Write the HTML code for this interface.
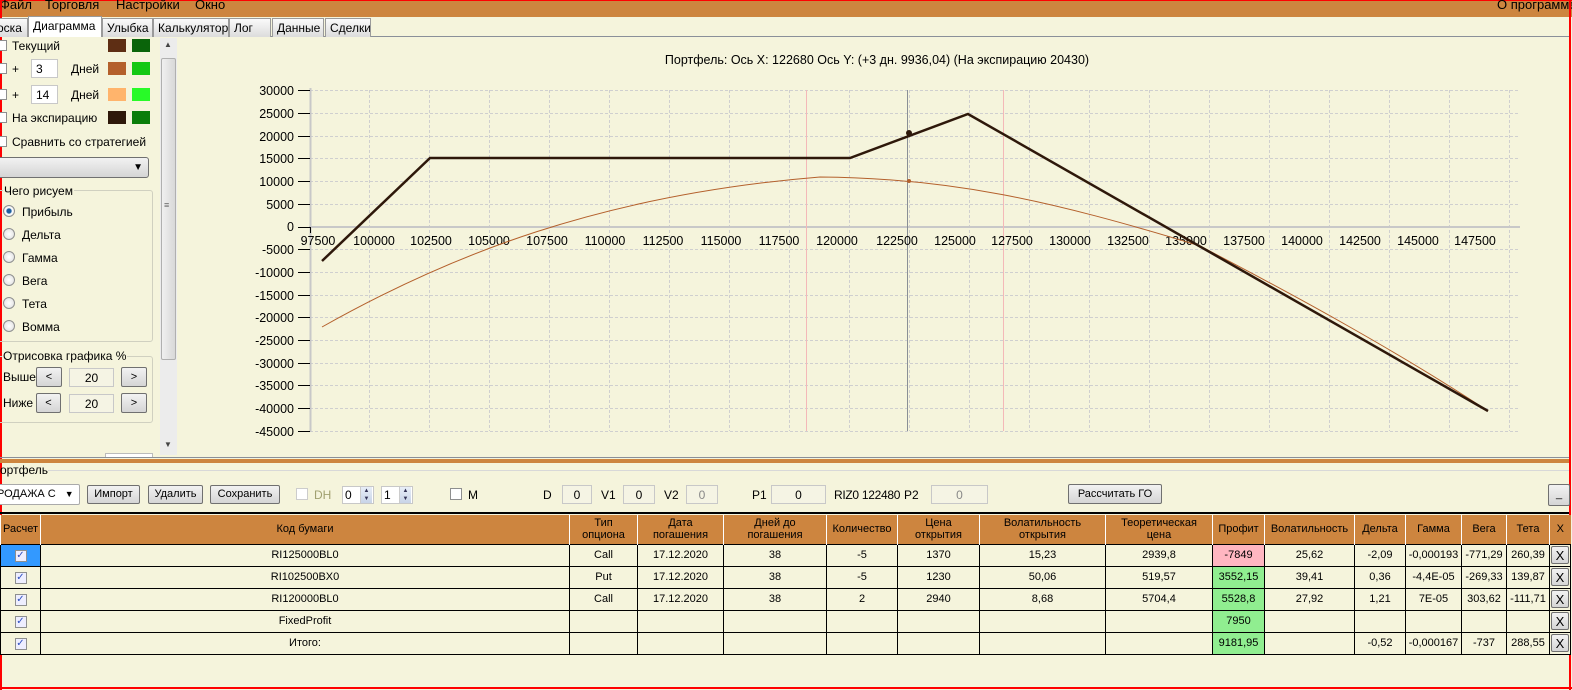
<!DOCTYPE html>
<html><head><meta charset="utf-8">
<style>
*{box-sizing:border-box;margin:0;padding:0}
body{width:1572px;height:690px;overflow:hidden;background:#f5f4dc;font-family:"Liberation Sans",Arial,sans-serif;font-size:12px;color:#000;position:relative}
.a{position:absolute;white-space:nowrap}
.menu{left:0;top:0;width:1572px;height:17px;background:#cd853f;border-top:1px solid #f00}
.menu span{position:absolute;top:-4px;font-size:13px;white-space:nowrap}
.tab{position:absolute;top:18px;height:19px;border:1px solid #9a9a9a;border-bottom:none;background:linear-gradient(#fafafa,#dcdcdc);font-size:12px;padding:2px 4px 0 4px;white-space:nowrap;overflow:hidden}
.cb{position:absolute;width:11px;height:11px;border:1px solid #8e8f8f;background:#fff}
.sw{position:absolute;width:18px;height:13px}
.inp{position:absolute;background:#fff;border:1px solid #c8c8c8;height:19px;padding:2px 4px}
.rd{position:absolute;width:12px;height:12px;border-radius:50%;border:1px solid #8e8f8f;background:radial-gradient(#fff,#ddd)}
.btn{position:absolute;border:1px solid #707070;border-radius:2px;background:linear-gradient(#f2f2f2,#d5d5d5);text-align:center;font-size:11px;white-space:nowrap}
.box{position:absolute;border:1px solid #d0d0c0;border-radius:3px}
.spn{position:absolute;width:12px;height:16px;border-left:1px solid #ccc;background:linear-gradient(#e8eef8,#c8d4e8);font-size:6px;line-height:8px;text-align:center;color:#335}
table{position:absolute;left:0;top:515px;border-collapse:collapse;table-layout:fixed;font-size:11px}
th{background:#cd853f;font-weight:normal;height:29px;border-left:1px solid #fff;line-height:12px;padding:0}
td{height:22px;border:1px solid #000;text-align:center;padding:0;background:#f5f4dc}
td.x{padding:1px}
td.x div{border:1px solid #707070;border-radius:2px;background:linear-gradient(#f2f2f2,#d5d5d5);height:18px;line-height:18px;font-size:13px}
.ck{display:inline-block;width:12px;height:12px;border:1px solid #8e8f8f;background:#eef;color:#3050c0;font-size:10px;line-height:10px}
</style></head><body>
<div class="a menu"><span style="left:0">Файл</span><span style="left:45px">Торговля</span><span style="left:116px">Настройки</span><span style="left:195px">Окно</span><span style="left:1497px">О программе</span></div>
<div class="a" style="left:0;top:0;width:2px;height:690px;background:#f00"></div>
<div class="a" style="left:1569px;top:0;width:2px;height:690px;background:#f00"></div>
<div class="a" style="left:0;top:687px;width:1572px;height:2px;background:#f00"></div>
<div class="a" style="left:0;top:36px;width:1569px;height:1px;background:#8a8f99"></div>
<div class="tab" style="left:-8px;width:36px">оска</div>
<div class="tab" style="left:28px;top:16px;height:21px;width:74px;background:#fff">Диаграмма</div>
<div class="tab" style="left:102px;width:51px">Улыбка</div>
<div class="tab" style="left:153px;width:76px">Калькулятор</div>
<div class="tab" style="left:229px;width:42px">Лог</div>
<div class="tab" style="left:272px;width:52px">Данные</div>
<div class="tab" style="left:325px;width:46px">Сделки</div>

<div class="cb" style="left:-4px;top:40px"></div><div class="a" style="left:12px;top:39px">Текущий</div>
<div class="sw" style="left:108px;top:39px;background:#5e2e14"></div><div class="sw" style="left:132px;top:39px;background:#0a640a"></div>
<div class="cb" style="left:-4px;top:63px"></div><div class="a" style="left:12px;top:62px">+</div>
<div class="inp" style="left:31px;top:59px;width:27px">3</div><div class="a" style="left:71px;top:62px">Дней</div>
<div class="sw" style="left:108px;top:62px;background:#b4602c"></div><div class="sw" style="left:132px;top:62px;background:#14c814"></div>
<div class="cb" style="left:-4px;top:89px"></div><div class="a" style="left:12px;top:88px">+</div>
<div class="inp" style="left:31px;top:85px;width:27px">14</div><div class="a" style="left:71px;top:88px">Дней</div>
<div class="sw" style="left:108px;top:88px;background:#ffb46c"></div><div class="sw" style="left:132px;top:88px;background:#28fa28"></div>
<div class="cb" style="left:-4px;top:112px"></div><div class="a" style="left:12px;top:111px">На экспирацию</div>
<div class="sw" style="left:108px;top:111px;background:#2e180a"></div><div class="sw" style="left:132px;top:111px;background:#0a7d0a"></div>
<div class="cb" style="left:-4px;top:136px"></div><div class="a" style="left:12px;top:135px">Сравнить со стратегией</div>
<div class="btn" style="left:-4px;top:157px;width:153px;height:21px;border-radius:3px;text-align:right;padding-right:5px;font-size:10px;line-height:19px">▼</div>
<div class="box" style="left:-4px;top:190px;width:157px;height:152px"></div>
<div class="a" style="left:3px;top:184px;background:#f5f4dc;padding:0 1px">Чего рисуем</div>
<div class="rd" style="left:3px;top:205px;background:radial-gradient(#1d5fa0 30%,#fff 45%,#ddd)"></div><div class="a" style="left:22px;top:205px">Прибыль</div>
<div class="rd" style="left:3px;top:228px"></div><div class="a" style="left:22px;top:228px">Дельта</div>
<div class="rd" style="left:3px;top:251px"></div><div class="a" style="left:22px;top:251px">Гамма</div>
<div class="rd" style="left:3px;top:274px"></div><div class="a" style="left:22px;top:274px">Вега</div>
<div class="rd" style="left:3px;top:297px"></div><div class="a" style="left:22px;top:297px">Тета</div>
<div class="rd" style="left:3px;top:320px"></div><div class="a" style="left:22px;top:320px">Вомма</div>
<div class="box" style="left:-4px;top:356px;width:157px;height:67px"></div>
<div class="a" style="left:2px;top:349px;background:#f5f4dc;padding:0 1px">Отрисовка графика %</div>
<div class="a" style="left:3px;top:370px">Выше</div>
<div class="btn" style="left:36px;top:367px;width:26px;height:20px;line-height:18px">&lt;</div>
<div class="inp" style="left:69px;top:368px;width:45px;text-align:center;background:#f5f4e4">20</div>
<div class="btn" style="left:121px;top:367px;width:26px;height:20px;line-height:18px">&gt;</div>
<div class="a" style="left:3px;top:396px">Ниже</div>
<div class="btn" style="left:36px;top:393px;width:25px;height:20px;line-height:18px">&lt;</div>
<div class="inp" style="left:69px;top:394px;width:45px;text-align:center;background:#f5f4e4">20</div>
<div class="btn" style="left:121px;top:393px;width:26px;height:20px;line-height:18px">&gt;</div>
<div class="a" style="left:105px;top:453px;width:48px;height:4px;border:1px solid #bbb;border-bottom:none;background:#fff"></div>
<div class="a" style="left:160px;top:38px;width:17px;height:417px;background:#ececec"></div>
<div class="a" style="left:161px;top:58px;width:15px;height:302px;background:linear-gradient(90deg,#f0f0f0,#d8d8d8);border:1px solid #b0b0b0;border-radius:2px"></div>
<div class="a" style="left:164px;top:40px;font-size:8px;color:#444">▲</div>
<div class="a" style="left:164px;top:440px;font-size:8px;color:#444">▼</div>
<div class="a" style="left:164px;top:200px;font-size:9px;color:#666">≡</div>

<svg class="a" style="left:0;top:0" width="1572" height="460" font-family="Liberation Sans,Arial,sans-serif" font-size="12">
<text x="877" y="64" text-anchor="middle" font-size="12.5">Портфель: Ось X: 122680 Ось Y:  (+3 дн. 9936,04)  (На экспирацию 20430)</text>
<g stroke="#cfcfcf" stroke-dasharray="3,2" stroke-width="1">
<line x1="310" y1="90.5" x2="1520" y2="90.5"/><line x1="310" y1="113.5" x2="1520" y2="113.5"/><line x1="310" y1="136.5" x2="1520" y2="136.5"/><line x1="310" y1="158.5" x2="1520" y2="158.5"/><line x1="310" y1="181.5" x2="1520" y2="181.5"/><line x1="310" y1="204.5" x2="1520" y2="204.5"/><line x1="310" y1="249.5" x2="1520" y2="249.5"/><line x1="310" y1="272.5" x2="1520" y2="272.5"/><line x1="310" y1="295.5" x2="1520" y2="295.5"/><line x1="310" y1="317.5" x2="1520" y2="317.5"/><line x1="310" y1="340.5" x2="1520" y2="340.5"/><line x1="310" y1="363.5" x2="1520" y2="363.5"/><line x1="310" y1="385.5" x2="1520" y2="385.5"/><line x1="310" y1="408.5" x2="1520" y2="408.5"/><line x1="310" y1="431.5" x2="1520" y2="431.5"/>
<line x1="369.5" y1="90" x2="369.5" y2="431"/><line x1="429.5" y1="90" x2="429.5" y2="431"/><line x1="489.5" y1="90" x2="489.5" y2="431"/><line x1="549.5" y1="90" x2="549.5" y2="431"/><line x1="609.5" y1="90" x2="609.5" y2="431"/><line x1="669.5" y1="90" x2="669.5" y2="431"/><line x1="729.5" y1="90" x2="729.5" y2="431"/><line x1="789.5" y1="90" x2="789.5" y2="431"/><line x1="849.5" y1="90" x2="849.5" y2="431"/><line x1="909.5" y1="90" x2="909.5" y2="431"/><line x1="969.5" y1="90" x2="969.5" y2="431"/><line x1="1029.5" y1="90" x2="1029.5" y2="431"/><line x1="1089.5" y1="90" x2="1089.5" y2="431"/><line x1="1149.5" y1="90" x2="1149.5" y2="431"/><line x1="1209.5" y1="90" x2="1209.5" y2="431"/><line x1="1269.5" y1="90" x2="1269.5" y2="431"/><line x1="1329.5" y1="90" x2="1329.5" y2="431"/><line x1="1389.5" y1="90" x2="1389.5" y2="431"/><line x1="1449.5" y1="90" x2="1449.5" y2="431"/><line x1="1509.5" y1="90" x2="1509.5" y2="431"/>
</g>
<line x1="310.5" y1="88" x2="310.5" y2="432" stroke="#c8c8c8" stroke-width="2"/>
<line x1="309" y1="227" x2="1520" y2="227" stroke="#c8c8c8" stroke-width="2"/>
<line x1="806.5" y1="90" x2="806.5" y2="431" stroke="#f4b8b8"/>
<line x1="1003.5" y1="90" x2="1003.5" y2="431" stroke="#f4b8b8"/>
<line x1="907.5" y1="90" x2="907.5" y2="431" stroke="#8a8f96"/>
<g stroke="#000"><line x1="298" y1="90.5" x2="310" y2="90.5"/><line x1="298" y1="113.5" x2="310" y2="113.5"/><line x1="298" y1="136.5" x2="310" y2="136.5"/><line x1="298" y1="158.5" x2="310" y2="158.5"/><line x1="298" y1="181.5" x2="310" y2="181.5"/><line x1="298" y1="204.5" x2="310" y2="204.5"/><line x1="298" y1="227.5" x2="310" y2="227.5"/><line x1="298" y1="249.5" x2="310" y2="249.5"/><line x1="298" y1="272.5" x2="310" y2="272.5"/><line x1="298" y1="295.5" x2="310" y2="295.5"/><line x1="298" y1="317.5" x2="310" y2="317.5"/><line x1="298" y1="340.5" x2="310" y2="340.5"/><line x1="298" y1="363.5" x2="310" y2="363.5"/><line x1="298" y1="385.5" x2="310" y2="385.5"/><line x1="298" y1="408.5" x2="310" y2="408.5"/><line x1="298" y1="431.5" x2="310" y2="431.5"/><line x1="310.5" y1="227" x2="310.5" y2="233"/></g>
<g text-anchor="end" font-size="12.5"><text x="294" y="95">30000</text><text x="294" y="118">25000</text><text x="294" y="141">20000</text><text x="294" y="163">15000</text><text x="294" y="186">10000</text><text x="294" y="209">5000</text><text x="294" y="231">0</text><text x="294" y="254">-5000</text><text x="294" y="277">-10000</text><text x="294" y="300">-15000</text><text x="294" y="322">-20000</text><text x="294" y="345">-25000</text><text x="294" y="368">-30000</text><text x="294" y="390">-35000</text><text x="294" y="413">-40000</text><text x="294" y="436">-45000</text></g>
<g text-anchor="middle" font-size="12.5"><text x="318" y="245">97500</text><text x="374" y="245">100000</text><text x="431" y="245">102500</text><text x="489" y="245">105000</text><text x="547" y="245">107500</text><text x="605" y="245">110000</text><text x="663" y="245">112500</text><text x="721" y="245">115000</text><text x="779" y="245">117500</text><text x="837" y="245">120000</text><text x="897" y="245">122500</text><text x="955" y="245">125000</text><text x="1012" y="245">127500</text><text x="1070" y="245">130000</text><text x="1128" y="245">132500</text><text x="1186" y="245">135000</text><text x="1244" y="245">137500</text><text x="1302" y="245">140000</text><text x="1360" y="245">142500</text><text x="1418" y="245">145000</text><text x="1475" y="245">147500</text></g>
<path fill="none" stroke="#b4602c" stroke-width="1" d="M322,327 C450,255 600,195 820,177 C950,178 1050,200 1200,246 C1300,298 1400,353 1488,411"/>
<polyline fill="none" stroke="#2e180a" stroke-width="2.5" points="322,261 430,158 850,158 968,114 1488,411"/>
<circle cx="909" cy="133" r="3" fill="#2e180a"/>
<circle cx="909" cy="181" r="2" fill="#b4602c"/>
</svg>

<div class="a" style="left:0;top:457px;width:1569px;height:1px;background:#8a8f99"></div>
<div class="a" style="left:0;top:459px;width:1569px;height:4px;background:#cd853f"></div>
<div class="a" style="left:0;top:463px">ортфель</div>
<div class="a" style="left:48px;top:470px;width:1521px;height:1px;background:#d8d8d8"></div>
<div class="btn" style="left:-4px;top:484px;width:84px;height:21px;background:#fff;border-color:#aaa;text-align:left;padding:3px 0 0 0;font-size:11px">РОДАЖА С <span style="font-size:9px;margin-left:6px">▼</span></div>
<div class="btn" style="left:87px;top:485px;width:53px;height:19px;line-height:17px">Импорт</div>
<div class="btn" style="left:148px;top:485px;width:55px;height:19px;line-height:17px">Удалить</div>
<div class="btn" style="left:210px;top:485px;width:70px;height:19px;line-height:17px">Сохранить</div>
<div class="cb" style="left:296px;top:488px;width:12px;height:12px;border-color:#ccc"></div><div class="a" style="left:314px;top:488px;color:#a0a070">DH</div>
<div class="inp" style="left:342px;top:486px;width:32px;height:18px;padding:1px 2px">0</div><div class="spn" style="left:360px;top:487px">▲<br>▼</div>
<div class="inp" style="left:381px;top:486px;width:32px;height:18px;padding:1px 2px">1</div><div class="spn" style="left:399px;top:487px">▲<br>▼</div>
<div class="cb" style="left:450px;top:488px;width:12px;height:12px"></div><div class="a" style="left:468px;top:488px">M</div>
<div class="a" style="left:543px;top:488px">D</div><div class="inp" style="left:562px;top:485px;width:30px;text-align:center;background:#f5f4e4">0</div>
<div class="a" style="left:601px;top:488px">V1</div><div class="inp" style="left:623px;top:485px;width:32px;text-align:center;background:#f5f4e4">0</div>
<div class="a" style="left:664px;top:488px">V2</div><div class="inp" style="left:686px;top:485px;width:32px;text-align:center;background:#f5f4e4;color:#888">0</div>
<div class="a" style="left:752px;top:488px">P1</div><div class="inp" style="left:771px;top:485px;width:55px;text-align:center;background:#f5f4e4">0</div>
<div class="a" style="left:834px;top:488px;letter-spacing:-0.3px">RIZ0 122480</div><div class="a" style="left:904px;top:488px">P2</div>
<div class="inp" style="left:931px;top:485px;width:57px;text-align:center;background:#f5f4e4;color:#888">0</div>
<div class="btn" style="left:1068px;top:484px;width:94px;height:20px;line-height:18px">Рассчитать ГО</div>
<div class="btn" style="left:1548px;top:484px;width:22px;height:22px;line-height:18px">_</div>
<div class="a" style="left:0;top:512px;width:1569px;height:2px;background:#000"></div>

<table>
<colgroup><col style="width:40px"><col style="width:529px"><col style="width:68px"><col style="width:86px"><col style="width:103px"><col style="width:71px"><col style="width:82px"><col style="width:126px"><col style="width:107px"><col style="width:52px"><col style="width:90px"><col style="width:51px"><col style="width:56px"><col style="width:45px"><col style="width:43px"><col style="width:21px"></colgroup>
<tr><th>Расчет</th><th>Код бумаги</th><th>Тип<br>опциона</th><th>Дата<br>погашения</th><th>Дней до<br>погашения</th><th>Количество</th><th>Цена<br>открытия</th><th>Волатильность<br>открытия</th><th>Теоретическая<br>цена</th><th>Профит</th><th>Волатильность</th><th>Дельта</th><th>Гамма</th><th>Вега</th><th>Тета</th><th>X</th></tr>
<tr><td style="background:#3399ff"><span class="ck">✓</span></td><td>RI125000BL0</td><td>Call</td><td>17.12.2020</td><td>38</td><td>-5</td><td>1370</td><td>15,23</td><td>2939,8</td><td style="background:#ffb6c1">-7849</td><td>25,62</td><td>-2,09</td><td>-0,000193</td><td>-771,29</td><td>260,39</td><td class="x"><div>X</div></td></tr>
<tr><td><span class="ck">✓</span></td><td>RI102500BX0</td><td>Put</td><td>17.12.2020</td><td>38</td><td>-5</td><td>1230</td><td>50,06</td><td>519,57</td><td style="background:#90ee90">3552,15</td><td>39,41</td><td>0,36</td><td>-4,4E-05</td><td>-269,33</td><td>139,87</td><td class="x"><div>X</div></td></tr>
<tr><td><span class="ck">✓</span></td><td>RI120000BL0</td><td>Call</td><td>17.12.2020</td><td>38</td><td>2</td><td>2940</td><td>8,68</td><td>5704,4</td><td style="background:#90ee90">5528,8</td><td>27,92</td><td>1,21</td><td>7E-05</td><td>303,62</td><td>-111,71</td><td class="x"><div>X</div></td></tr>
<tr><td><span class="ck">✓</span></td><td>FixedProfit</td><td></td><td></td><td></td><td></td><td></td><td></td><td></td><td style="background:#90ee90">7950</td><td></td><td></td><td></td><td></td><td></td><td class="x"><div>X</div></td></tr>
<tr><td><span class="ck">✓</span></td><td>Итого:</td><td></td><td></td><td></td><td></td><td></td><td></td><td></td><td style="background:#90ee90">9181,95</td><td></td><td>-0,52</td><td>-0,000167</td><td>-737</td><td>288,55</td><td class="x"><div>X</div></td></tr>
</table>
</body></html>
